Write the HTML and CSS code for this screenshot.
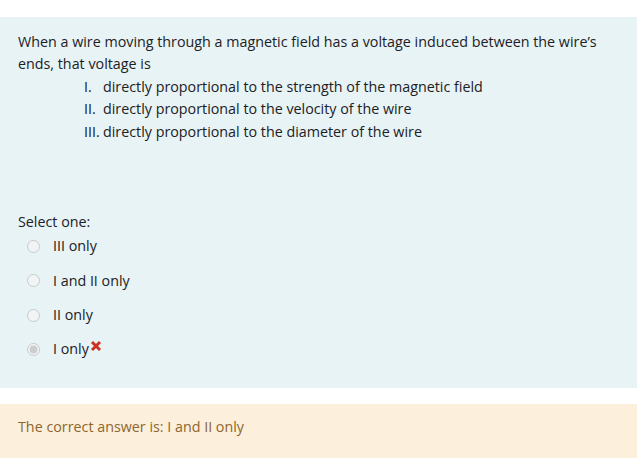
FILE: index.html
```html
<!DOCTYPE html>
<html lang="en">
<head>
    <meta charset="UTF-8">
    <title>Question</title>
    <link rel="stylesheet" href="styles.css">
</head>
<body>
    <div class="formulation">
        <div class="qtext">
            <p>When a wire moving through a magnetic field has a voltage induced between the wire’s ends, that voltage is</p>
            <ol class="roman">
                <li><span class="num">I.</span>directly proportional to the strength of the magnetic field</li>
                <li><span class="num">II.</span>directly proportional to the velocity of the wire</li>
                <li><span class="num">III.</span>directly proportional to the diameter of the wire</li>
            </ol>
        </div>
        <div class="ablock">
            <div class="prompt">Select one:</div>
            <div class="answer">
                <label class="option"><input type="radio" name="q1" disabled> III only</label>
                <label class="option"><input type="radio" name="q1" disabled> I and II only</label>
                <label class="option"><input type="radio" name="q1" disabled> II only</label>
                <label class="option"><input type="radio" name="q1" checked disabled> I only<svg class="wrong" width="12" height="12" viewBox="0 0 12 12"><path d="M2 2 L10 10 M10 2 L2 10" stroke="#ca3120" stroke-width="3" stroke-linecap="butt"/></svg></label>
            </div>
        </div>
    </div>
    <div class="outcome">
        <div class="rightanswer">The correct answer is: I and II only</div>
    </div>
</body>
</html>
```

FILE: styles.css
```css
body {
    margin: 0;
    padding-top: 17px;
    font-family: "Open Sans", sans-serif;
    font-size: 14.3px;
    line-height: 22.4px;
    color: #1d2125;
    background: #fff;
}
.formulation {
    background: #e7f3f5;
    width: 637px;
    height: 371px;
    box-sizing: border-box;
    padding: 14px 18px 0;
}
.qtext p {
    margin: 0;
}
.roman {
    list-style: none;
    margin: 0;
    padding-left: 66px;
}
.roman .num {
    display: inline-block;
    width: 19px;
}
.ablock {
    margin-top: 68px;
}
.answer {
    display: flex;
    flex-direction: column;
    padding-left: 8px;
    margin-top: -4px;
}
.option {
    display: flex;
    align-items: center;
    height: 34.3px;
}
.option input {
    width: 13px;
    height: 13px;
    margin: 0 13px 0 1px;
}
.wrong {
    margin-left: 1px;
    position: relative;
    top: -3px;
}
.outcome {
    background: #fcefdc;
    width: 637px;
    height: 54px;
    margin-top: 16px;
    box-sizing: border-box;
    padding: 12px 18px;
    color: #8e662e;
}
```
